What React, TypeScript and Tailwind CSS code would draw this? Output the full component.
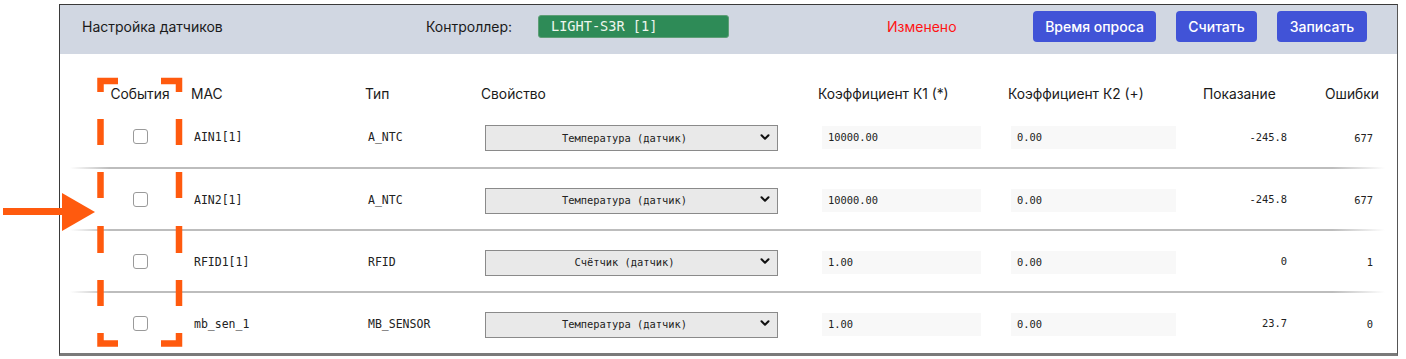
import { ChevronDown } from 'lucide-react';

interface SensorRow {
  mac: string;
  type: string;
  property: string;
  k1: string;
  k2: string;
  value: string;
  errors: string;
}

const rows: SensorRow[] = [
  { mac: 'AIN1[1]', type: 'A_NTC', property: 'Температура (датчик)', k1: '10000.00', k2: '0.00', value: '-245.8', errors: '677' },
  { mac: 'AIN2[1]', type: 'A_NTC', property: 'Температура (датчик)', k1: '10000.00', k2: '0.00', value: '-245.8', errors: '677' },
  { mac: 'RFID1[1]', type: 'RFID', property: 'Счётчик (датчик)', k1: '1.00', k2: '0.00', value: '0', errors: '1' },
  { mac: 'mb_sen_1', type: 'MB_SENSOR', property: 'Температура (датчик)', k1: '1.00', k2: '0.00', value: '23.7', errors: '0' },
];

const sans = "font-['Inter','Noto_Sans',sans-serif]";
const mono = "font-['DejaVu_Sans_Mono','Liberation_Mono',monospace]";
const cols = 'grid grid-cols-[40px_80px_185px_116px_337px_190px_182px_100px_107px]';

function Annotation() {
  const orange = '#ff5a0e';
  const dashes = [
    [119, 145],
    [172, 198],
    [226, 253],
    [280, 306],
  ];
  return (
    <svg
      className="absolute left-0 top-0 pointer-events-none"
      width={1406}
      height={359}
      viewBox="0 0 1406 359"
    >
      <g fill="none" stroke={orange} strokeWidth={6.5} strokeLinecap="butt" strokeLinejoin="miter">
        <path d="M100.5 92 V81 H118" />
        <path d="M161 81 H179 V92" />
        <path d="M100.5 333 V343.5 H118" />
        <path d="M161 343.5 H179 V333" />
        {dashes.map(([a, b]) => (
          <g key={a}>
            <line x1={100.5} y1={a} x2={100.5} y2={b} />
            <line x1={179} y1={a} x2={179} y2={b} />
          </g>
        ))}
        <line x1={3} y1={211.5} x2={66} y2={211.5} strokeWidth={7} />
      </g>
      <polygon points="62,193 95,212 62,231" fill={orange} />
    </svg>
  );
}

export default function App() {
  return (
    <div className={`relative w-[1406px] h-[359px] bg-white ${sans}`}>
      <div className="pt-[4px] pl-[59px]">
        <div className="w-[1339px] h-[352px] border border-[#3a3a3a] border-r-[#555] border-b-[3px] border-b-[#7a7a7a] flex flex-col">
          {/* header bar */}
          <div className="h-[50px] bg-[#d1d7e2] text-[14px] text-[#1a1a1a]">
            <div className="h-[43px] flex items-center">
              <div className="w-[366px] pl-[22px]">Настройка датчиков</div>
              <div className="w-[112px]">Контроллер:</div>
              <div className={`w-[191px] h-[23px] rounded-[3px] bg-[#2e8b57] border border-[#5e9e76] text-[#eef6ee] text-[13.6px] leading-[21px] pl-[12px] ${mono}`}>
                LIGHT-S3R [1]
              </div>
              <div className="w-[158px]" />
              <div className="w-[146px] text-[#ff1414]">Изменено</div>
              <button className="w-[123px] h-[31px] rounded-[4px] bg-[#4153d7] text-white text-[14px] font-medium">
                Время опроса
              </button>
              <button className="ml-[20px] w-[81px] h-[31px] rounded-[4px] bg-[#4153d7] text-white text-[14px] font-medium">
                Считать
              </button>
              <button className="ml-[20px] w-[90px] h-[31px] rounded-[4px] bg-[#4153d7] text-white text-[14px] font-medium">
                Записать
              </button>
            </div>
          </div>

          {/* column headers */}
          <div className={`${cols} h-[52px] pt-[30px] text-[13.8px] leading-[20px] text-[#1a1a1a]`}>
            <div />
            <div className="text-center">События</div>
            <div className="pl-[11px]">MAC</div>
            <div>Тип</div>
            <div>Свойство</div>
            <div>Коэффициент К1 (*)</div>
            <div>Коэффициент К2 (+)</div>
            <div className="pl-[13px]">Показание</div>
            <div className="pl-[35px]">Ошибки</div>
          </div>

          {/* rows */}
          {rows.map((row, i) => (
            <div key={row.mac}>
              {i > 0 && (
                <div className="ml-[10px] w-[1315px] h-[2px] bg-[linear-gradient(to_right,transparent,#bdbdbd_3%,#bdbdbd_96%,transparent)]" />
              )}
              <div className={`${cols} ${i > 0 ? 'h-[60px]' : 'h-[61px]'} items-center text-[#222]`}>
                <div />
                <div className="flex justify-center">
                  <input
                    type="checkbox"
                    className="appearance-none w-[15px] h-[15px] rounded-[3px] border border-[#9a9a9a] bg-white"
                  />
                </div>
                <div className={`pl-[14px] pt-[3px] text-[11.5px] ${mono}`}>{row.mac}</div>
                <div className={`pl-[3px] pt-[3px] text-[11.5px] ${mono}`}>{row.type}</div>
                <div className="pl-[4px]">
                  <div className="relative w-[293px] h-[26px]">
                    <select
                      defaultValue={row.property}
                      className={`appearance-none w-full h-full bg-[#e9e9e9] border border-[#8a8a8a] text-center pr-[14px] text-[10.4px] text-[#222] ${mono}`}
                    >
                      <option>{row.property}</option>
                    </select>
                    <ChevronDown
                      className="absolute right-[6px] top-[6px] w-[14px] h-[14px] text-[#111] pointer-events-none"
                      strokeWidth={3.5}
                    />
                  </div>
                </div>
                <div className="pl-[4px] pt-[2px]">
                  <div className={`w-[159px] h-[23px] bg-[#f8f8f8] pl-[6px] text-[10.4px] leading-[23px] ${mono}`}>
                    {row.k1}
                  </div>
                </div>
                <div className="pl-[3px] pt-[2px]">
                  <div className={`w-[165px] h-[23px] bg-[#f8f8f8] pl-[6px] text-[10.4px] leading-[23px] ${mono}`}>
                    {row.k2}
                  </div>
                </div>
                <div className={`text-right pr-[3px] pt-[2px] text-[10.4px] ${mono}`}>{row.value}</div>
                <div className={`text-right pr-[24px] pt-[4px] text-[10.4px] ${mono}`}>{row.errors}</div>
              </div>
            </div>
          ))}
        </div>
      </div>
      <Annotation />
    </div>
  );
}
